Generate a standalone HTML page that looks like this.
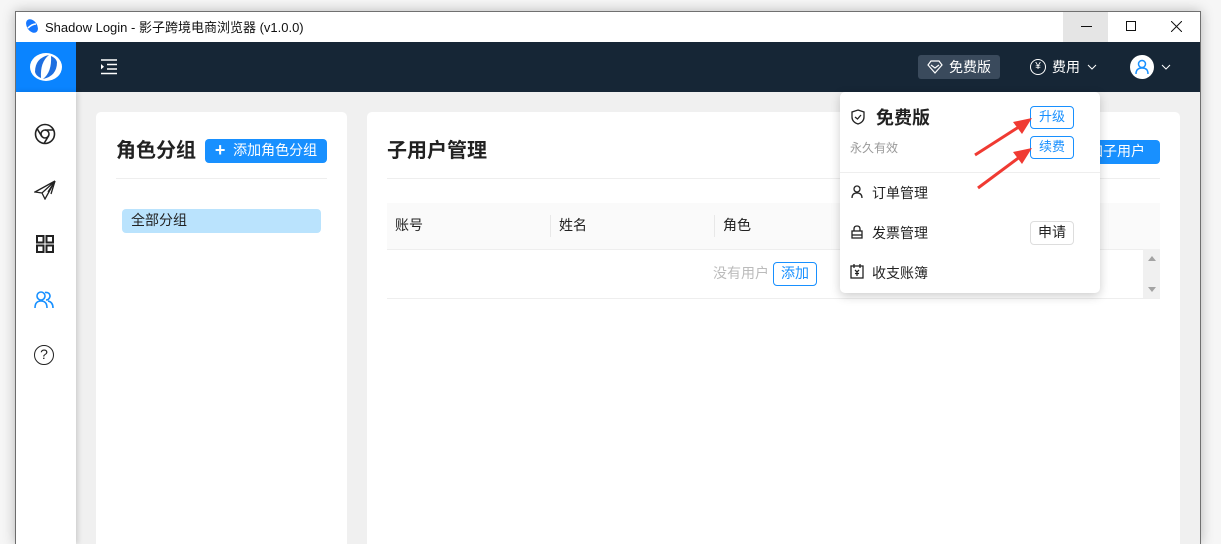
<!DOCTYPE html>
<html style="width:1221px;height:544px;overflow:hidden"><head><meta charset="utf-8"><style>
*{box-sizing:border-box;margin:0;padding:0}
body{width:1221px;height:544px;overflow:hidden;background:#f6f6f6;font-family:"Liberation Sans","Noto Sans CJK SC",sans-serif;position:relative;color:#222}
.a{position:absolute}
.win{left:15px;top:11px;width:1186px;height:533px;border:1px solid #707070;border-bottom:0;background:#f0f0f0;box-shadow:0 0 12px rgba(0,0,0,.25)}
.btn{background:#1890ff;color:#fff;border-radius:4px;font-size:14px;text-align:center}
.ob{border:1px solid #1890ff;color:#1890ff;border-radius:4px;font-size:13px;text-align:center;background:#fff}
</style></head><body>
<div class="a win"></div>
<div class="a" style="left:16px;top:12px;width:1184px;height:30px;background:#fff"></div>
<svg class="a" style="left:24px;top:18px" width="16" height="16" viewBox="0 0 16 16"><ellipse cx="8" cy="8" rx="5" ry="7.5" transform="rotate(-35 8 8)" fill="#1677ff"/><path d="M4 10 Q8 6 12 6" stroke="#fff" stroke-width="1.6" fill="none"/></svg>
<div class="a" style="left:45px;top:17px;font-size:13px;color:#111">Shadow Login - 影子跨境电商浏览器 (v1.0.0)</div>
<div class="a" style="left:1063px;top:12px;width:45px;height:30px;background:#e5e5e5"></div>
<div class="a" style="left:1081px;top:26px;width:11px;height:1px;background:#111"></div>
<div class="a" style="left:1126px;top:21px;width:10px;height:10px;border:1px solid #111"></div>
<svg class="a" style="left:1171px;top:21px" width="11" height="11"><path d="M0 0L11 11M11 0L0 11" stroke="#111" stroke-width="1"/></svg>
<div class="a" style="left:16px;top:42px;width:1184px;height:50px;background:#162636"></div>
<div class="a" style="left:16px;top:42px;width:60px;height:50px;background:#0a84ff"></div>
<svg class="a" style="left:29px;top:52px" width="34" height="30" viewBox="0 0 34 30"><ellipse cx="17" cy="15" rx="16" ry="14" fill="#fff"/><path d="M6 20 Q6 6 20 3 Q11 10 12 26 Q7 24 6 20Z" fill="#1e6fe0"/><path d="M28 10 Q28 24 14 27 Q23 20 22 4 Q27 6 28 10Z" fill="#1e6fe0"/></svg>
<svg class="a" style="left:100px;top:59px" width="18" height="16"><path d="M1 1H17M7 5.5H17M7 10H17M1 14.5H17" stroke="#fff" stroke-width="1.5"/><path d="M1 5L4 7.7L1 10.4Z" fill="#fff"/></svg>
<div class="a" style="left:918px;top:55px;width:82px;height:24px;background:#3a4a5c;border-radius:3px"></div>
<svg class="a" style="left:927px;top:60px" width="16" height="14"><path d="M1 5L4 1H12L15 5L8 13Z M4 5L8 8L12 5" stroke="#fff" stroke-width="1.2" fill="none"/></svg>
<div class="a" style="left:949px;top:57px;color:#fff;font-size:14px">免费版</div>
<div class="a" style="left:1030px;top:59px;width:16px;height:16px;border:1.5px solid #fff;border-radius:50%;color:#fff;font-size:10px;text-align:center;line-height:13px">¥</div>
<div class="a" style="left:1052px;top:57px;color:#fff;font-size:14px">费用</div>
<svg class="a" style="left:1087px;top:64px" width="10" height="6"><path d="M1 1L5 5L9 1" stroke="#fff" fill="none"/></svg>
<div class="a" style="left:1130px;top:55px;width:24px;height:24px;border-radius:50%;background:#fff"></div>
<svg class="a" style="left:1135px;top:59px" width="14" height="16"><circle cx="7" cy="5" r="3.5" stroke="#1890ff" stroke-width="1.5" fill="none"/><path d="M1 15Q1 9 7 9Q13 9 13 15" stroke="#1890ff" stroke-width="1.5" fill="none"/></svg>
<svg class="a" style="left:1161px;top:64px" width="10" height="6"><path d="M1 1L5 5L9 1" stroke="#fff" fill="none"/></svg>
<div class="a" style="left:16px;top:92px;width:60px;height:452px;background:#fff;box-shadow:2px 0 5px rgba(0,0,0,.15)"></div>
<svg class="a" style="left:34px;top:123px" width="22" height="22" viewBox="0 0 22 22" fill="none" stroke="#222" stroke-width="1.6"><circle cx="11" cy="11" r="9.5"/><circle cx="11" cy="11" r="4"/><path d="M11 7H20M7.5 13L3 5.5M14.5 13L10 20.5"/></svg>
<svg class="a" style="left:34px;top:180px" width="22" height="20" viewBox="0 0 22 20" fill="none" stroke="#222" stroke-width="1.3"><path d="M21 1L1 12L8 13L21 1L11 19L8 13"/><path d="M21 1L14 12M21 1L17 14"/></svg>
<svg class="a" style="left:36px;top:235px" width="18" height="18" fill="none" stroke="#222" stroke-width="2"><rect x="1" y="1" width="6.5" height="6.5"/><rect x="10.5" y="1" width="6.5" height="6.5"/><rect x="1" y="10.5" width="6.5" height="6.5"/><rect x="10.5" y="10.5" width="6.5" height="6.5"/></svg>
<svg class="a" style="left:34px;top:290px" width="20" height="20" fill="none" stroke="#1890ff" stroke-width="1.6"><circle cx="7" cy="6" r="4"/><path d="M1 18Q1 11 7 11Q13 11 13 18M11 2.5Q16 2 16 6.5Q15 10 12 10M14 11Q19 12 19 18"/></svg>
<div class="a" style="left:34px;top:345px;width:20px;height:20px;border:1.6px solid #222;border-radius:50%;font-size:14px;text-align:center;line-height:17px;color:#222">?</div>
<div class="a" style="left:96px;top:112px;width:251px;height:432px;background:#fff;border-radius:5px 5px 0 0"></div>
<div class="a" style="left:116px;top:134px;font-size:20px;font-weight:bold;color:#222">角色分组</div>
<div class="a btn" style="left:205px;top:139px;width:122px;height:24px;line-height:23px"><b style="font-size:18px;vertical-align:-1px">+</b>&nbsp; 添加角色分组</div>
<div class="a" style="left:116px;top:178px;width:211px;height:1px;background:#eee"></div>
<div class="a" style="left:122px;top:209px;width:199px;height:24px;background:#bae3fd;border-radius:4px;font-size:14px;line-height:23px;padding-left:9px;color:#222">全部分组</div>
<div class="a" style="left:367px;top:112px;width:813px;height:432px;background:#fff;border-radius:5px 5px 0 0"></div>
<div class="a" style="left:387px;top:134px;font-size:20px;font-weight:bold;color:#222">子用户管理</div>
<div class="a btn" style="left:1060px;top:140px;width:100px;height:24px;line-height:23px">添加子用户</div>
<div class="a" style="left:387px;top:178px;width:773px;height:1px;background:#eee"></div>
<div class="a" style="left:387px;top:203px;width:773px;height:47px;background:#fafafa;border-bottom:1px solid #eee"></div>
<div class="a" style="left:395px;top:215px;font-size:14px">账号</div>
<div class="a" style="left:550px;top:215px;width:1px;height:22px;background:#e8e8e8"></div>
<div class="a" style="left:559px;top:215px;font-size:14px">姓名</div>
<div class="a" style="left:714px;top:215px;width:1px;height:22px;background:#e8e8e8"></div>
<div class="a" style="left:723px;top:215px;font-size:14px">角色</div>
<div class="a" style="left:1143px;top:249px;width:17px;height:49px;background:#f0f0f0"></div>
<div class="a" style="left:1148px;top:256px;width:0;height:0;border:4px solid transparent;border-bottom:5px solid #a3a3a3;border-top:0"></div>
<div class="a" style="left:1148px;top:287px;width:0;height:0;border:4px solid transparent;border-top:5px solid #a3a3a3;border-bottom:0"></div>
<div class="a" style="left:387px;top:298px;width:773px;height:1px;background:#eee"></div>
<div class="a" style="left:713px;top:263px;font-size:14px;color:#bbb">没有用户</div>
<div class="a ob" style="left:773px;top:262px;width:44px;height:24px;line-height:21px;font-size:14px">添加</div>
<div class="a" style="left:840px;top:92px;width:260px;height:201px;background:#fff;border-radius:5px;box-shadow:0 3px 10px rgba(0,0,0,.2)"></div>
<svg class="a" style="left:851px;top:109px" width="14" height="16" fill="none" stroke="#222" stroke-width="1.3"><path d="M7 1L13 3V8Q13 13 7 15Q1 13 1 8V3Z"/><path d="M4 8L6.5 10L10 6"/></svg>
<div class="a" style="left:876px;top:104px;font-size:18px;font-weight:bold;color:#222">免费版</div>
<div class="a" style="left:850px;top:139px;font-size:12px;color:#999">永久有效</div>
<div class="a ob" style="left:1030px;top:106px;width:44px;height:23px;line-height:20px">升级</div>
<div class="a ob" style="left:1030px;top:136px;width:44px;height:23px;line-height:20px">续费</div>
<div class="a" style="left:840px;top:172px;width:260px;height:1px;background:#eee"></div>
<svg class="a" style="left:851px;top:185px" width="12" height="14" fill="none" stroke="#222" stroke-width="1.3"><circle cx="6" cy="4" r="3"/><path d="M1 13Q1 8 6 8Q11 8 11 13"/></svg>
<div class="a" style="left:872px;top:183px;font-size:14px">订单管理</div>
<svg class="a" style="left:851px;top:225px" width="12" height="14" fill="none" stroke="#222" stroke-width="1.3"><path d="M3 6V4Q3 1 6 1Q9 1 9 4V6"/><rect x="1" y="6" width="10" height="7"/><path d="M1 10H11"/></svg>
<div class="a" style="left:872px;top:223px;font-size:14px">发票管理</div>
<div class="a" style="left:1030px;top:221px;width:44px;height:24px;border:1px solid #ddd;border-radius:4px;font-size:14px;text-align:center;line-height:21px">申请</div>
<svg class="a" style="left:850px;top:264px" width="14" height="15" fill="none" stroke="#222" stroke-width="1.3"><rect x="1" y="2" width="12" height="12"/><path d="M4 0V4M10 0V4M5 6L7 8L9 6M7 8V12M5 9.5H9"/></svg>
<div class="a" style="left:872px;top:263px;font-size:14px">收支账簿</div>
<svg class="a" style="left:970px;top:110px" width="66" height="82"><path d="M5 45L55 13" stroke="#f03a32" stroke-width="3"/><path d="M62 8L43 12L52 24Z" fill="#f03a32"/><path d="M8 78L55 43" stroke="#f03a32" stroke-width="3"/><path d="M62 38L43 42L52 54Z" fill="#f03a32"/></svg>
</body></html>
